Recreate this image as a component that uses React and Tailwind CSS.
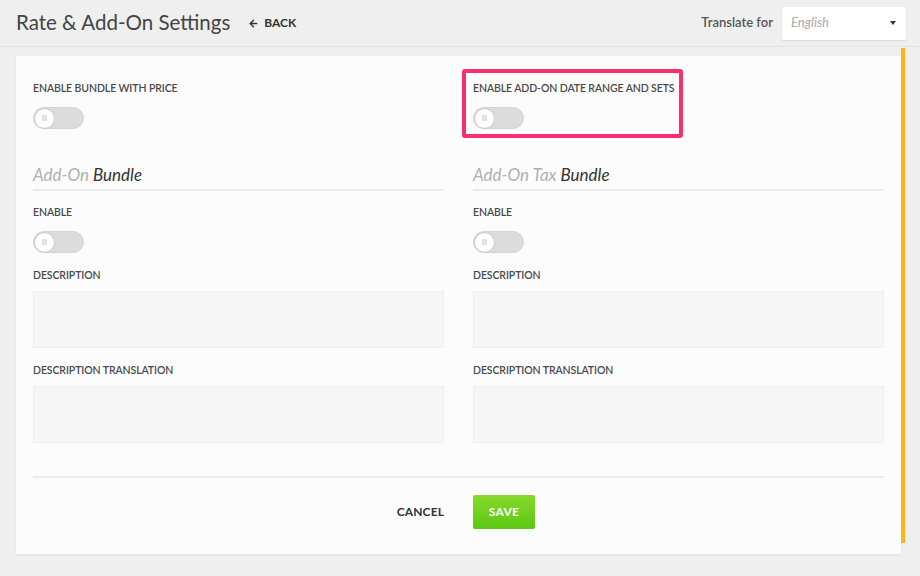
import { ArrowLeft } from 'lucide-react';

const font = { fontFamily: 'Lato, "Noto Sans", sans-serif' };

function Toggle() {
  return (
    <div className="w-[51px] h-[22px] rounded-full bg-[#dcdcdc] border border-[#d4d4d4] flex items-center pl-[1px]">
      <div className="w-[19px] h-[19px] rounded-full bg-white shadow-[0_0_2px_rgba(0,0,0,0.2)] flex items-center justify-center">
        <div className="w-[5px] h-[6px] bg-[#e2e2e2]" />
      </div>
    </div>
  );
}

function Label({ children }) {
  return <div className="text-[10.5px] leading-[14px] font-semibold uppercase text-[#4a4a4a] tracking-[-0.1px]">{children}</div>;
}

function Box() {
  return <div className="h-[57px] bg-[#f6f6f6] border border-[#efefef]" />;
}

function Column({ light, dark }) {
  return (
    <div className="flex flex-col">
      <div className="text-[17px] italic leading-[22px] pb-[3px] border-b-2 border-[#ececec]">
        <span className="text-[#b0b0b0]">{light} </span>
        <span className="text-[#333]">{dark}</span>
      </div>
      <div className="mt-[14px]"><Label>Enable</Label></div>
      <div className="mt-[12px]"><Toggle /></div>
      <div className="mt-[15px]"><Label>Description</Label></div>
      <div className="mt-[9px]"><Box /></div>
      <div className="mt-[15px]"><Label>Description Translation</Label></div>
      <div className="mt-[9px]"><Box /></div>
    </div>
  );
}

export default function App() {
  return (
    <div className="w-[920px] h-[576px] bg-[#efefef] flex flex-col overflow-hidden" style={font}>
      <header className="h-[47px] shrink-0 flex items-center border-b border-[#e3e3e3] pl-4 pr-[14px]">
        <h1 className="text-[20.5px] text-[#444] leading-none -mt-[1px]">Rate &amp; Add-On Settings</h1>
        <button className="ml-[18px] flex items-center gap-[5px] text-[12px] font-bold text-[#333]">
          <ArrowLeft className="w-[11px] h-[11px]" strokeWidth={3} />
          BACK
        </button>
        <div className="ml-auto flex items-center gap-[9px]">
          <span className="text-[13px] font-semibold text-[#555]">Translate for</span>
          <div className="w-[124px] h-[33px] bg-white shadow-[0_1px_2px_rgba(0,0,0,0.1)] rounded-[2px] flex items-center justify-between pl-[9px] pr-[10px]">
            <span className="text-[13px] italic text-[#aaa]">English</span>
            <span className="w-0 h-0 border-l-[3px] border-r-[3px] border-t-[4px] border-l-transparent border-r-transparent border-t-[#333]" />
          </div>
        </div>
      </header>
      <div className="flex flex-1 min-h-0 pr-[15px]">
        <div className="flex-1 pl-4 pt-[9px] pb-[22px]">
          <div className="h-full bg-[#fcfcfc] shadow-[0_1px_2px_rgba(0,0,0,0.06)] px-[17px] pt-[25px] flex flex-col">
            <div className="grid grid-cols-2 gap-x-[29px]">
              <div className="flex flex-col">
                <Label>Enable bundle with price</Label>
                <div className="mt-[12px]"><Toggle /></div>
              </div>
              <div className="relative flex flex-col">
                <Label>Enable add-on date range and sets</Label>
                <div className="mt-[12px]"><Toggle /></div>
                <div className="absolute left-[-11px] top-[-12px] w-[221px] h-[69px] border-4 border-[#f9306d] rounded-[3px]" />
              </div>
            </div>
            <div className="grid grid-cols-2 gap-x-[29px] mt-[35px]">
              <Column light="Add-On" dark="Bundle" />
              <Column light="Add-On Tax" dark="Bundle" />
            </div>
            <div className="mt-[33px] border-t-2 border-[#ececec]" />
            <div className="grid grid-cols-2 gap-x-[29px] mt-[17px]">
              <div className="flex justify-end items-center">
                <button className="text-[12px] font-bold text-[#333] tracking-[0.1px]">CANCEL</button>
              </div>
              <div>
                <button className="w-[62px] h-[34px] rounded-[2px] bg-gradient-to-b from-[#88d92c] to-[#5ac70f] text-white text-[12px] font-bold tracking-[0.3px]">SAVE</button>
              </div>
            </div>
          </div>
        </div>
        <div className="w-[4px] bg-[#ffb21c] mt-[1px] mb-[33px]" />
      </div>
    </div>
  );
}
